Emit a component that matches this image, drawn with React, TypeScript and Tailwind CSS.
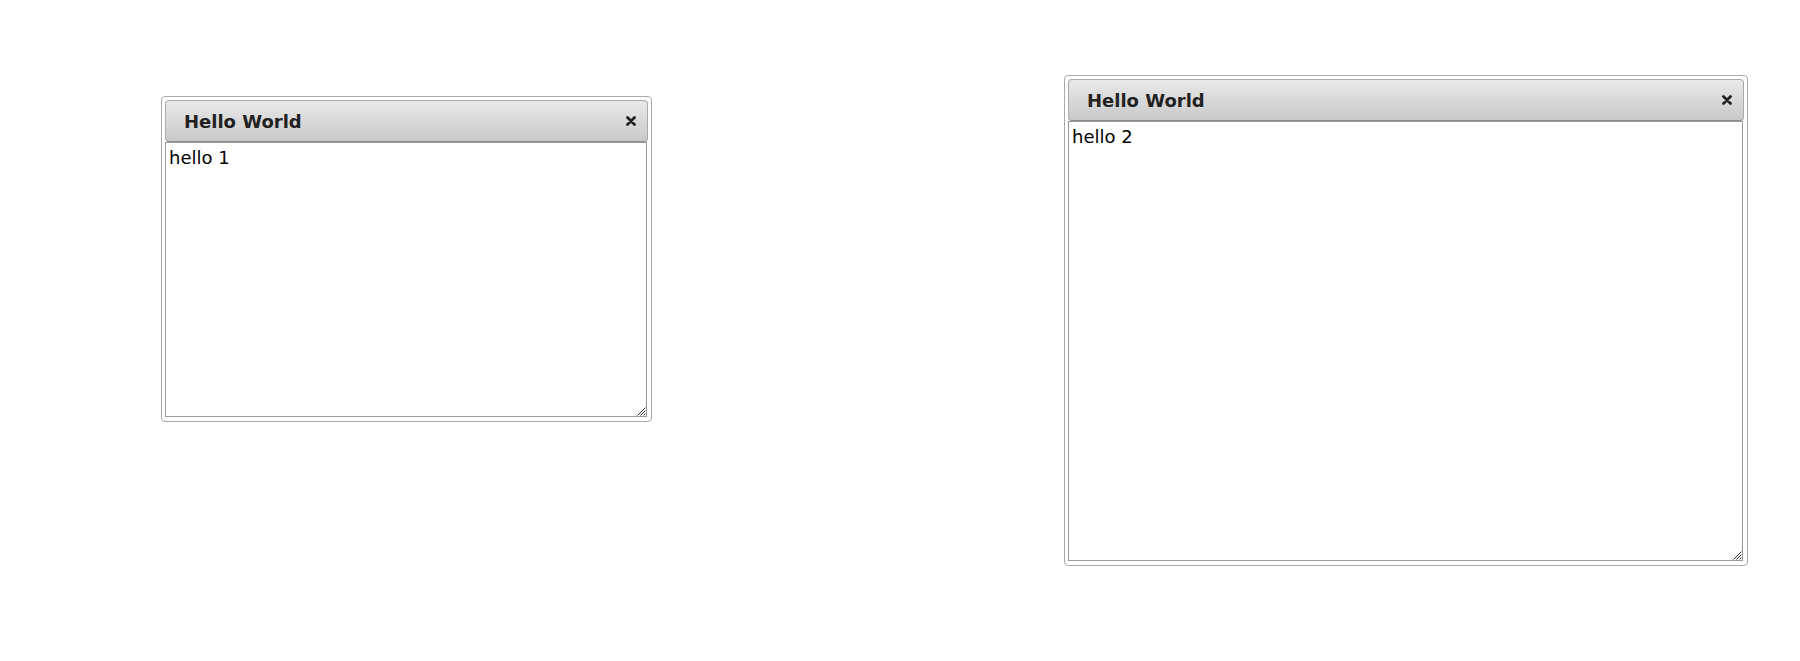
import { useState } from "react"

type DialogProps = {
  left: number
  top: number
  width: number
  height: number
  text: string
}

function CloseIcon() {
  return (
    <svg width="10" height="10" viewBox="0 0 10 10" className="block">
      <path d="M1.5 1.5 L8.5 8.5 M8.5 1.5 L1.5 8.5" stroke="#222" strokeWidth="2.8" strokeLinecap="round" />
    </svg>
  )
}

function ResizeGrip() {
  return (
    <svg width="10" height="10" viewBox="0 0 10 10" className="pointer-events-none absolute bottom-[1px] right-[2px]">
      <path d="M9.5 1.5 L1.5 9.5 M9.5 4.5 L4.5 9.5 M9.5 7.5 L7.5 9.5" stroke="#333" strokeWidth="1" />
    </svg>
  )
}

function Dialog({ left, top, width, height, text }: DialogProps) {
  const [value, setValue] = useState(text)
  return (
    <div
      className="absolute flex flex-col rounded-[4px] border border-[#aaaaaa] bg-white px-[3px] pb-[4px] pt-[3px]"
      style={{ left, top, width, height }}
    >
      <div className="flex h-[42px] shrink-0 items-center justify-between rounded-[4px] border border-[#aaaaaa] border-b-[#8c8c8c] bg-gradient-to-b from-[#e9e9e9] to-[#c9c9c9] pl-[18px] pr-[10px]">
        <span className="text-[18px] font-bold text-[#222222]">Hello World</span>
        <button className="flex size-[12px] items-center justify-center">
          <CloseIcon />
        </button>
      </div>
      <div className="relative flex flex-1 pr-[1px]">
        <textarea
          value={value}
          onChange={e => setValue(e.target.value)}
          className="block w-full flex-1 resize-none border border-[#999999] bg-white px-[3px] py-[1px] text-[18px] text-black outline-none"
        />
        <ResizeGrip />
      </div>
    </div>
  )
}

export default function App() {
  return (
    <div className="relative h-[661px] w-[1800px] bg-white font-['DejaVu_Sans',_Verdana,_sans-serif]">
      <Dialog left={161} top={96} width={491} height={326} text="hello 1" />
      <Dialog left={1064} top={75} width={684} height={491} text="hello 2" />
    </div>
  )
}
